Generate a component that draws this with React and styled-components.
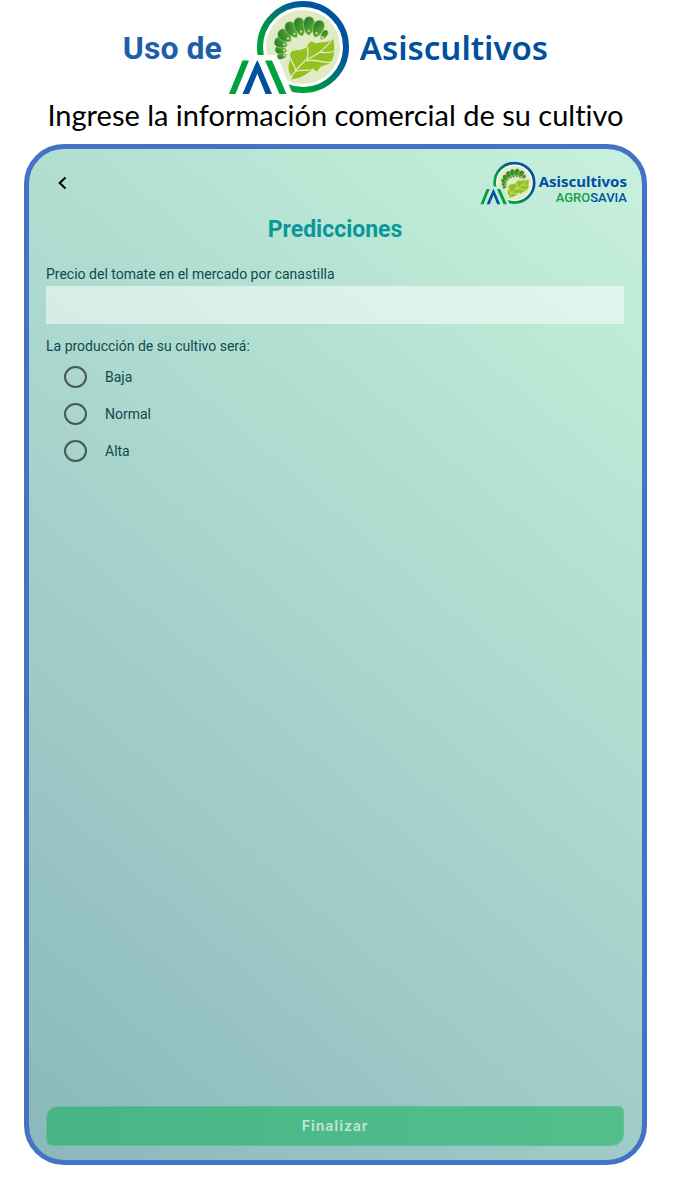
import { useState } from "react";
import styled, { createGlobalStyle } from "styled-components";

const GlobalStyle = createGlobalStyle`
  *, *::before, *::after {
    box-sizing: border-box;
  }
  body {
    margin: 0;
    background: #fff;
    font-family: Roboto, sans-serif;
  }
`;

const Page = styled.main`
  display: flex;
  flex-direction: column;
  min-height: 100vh;
  padding: 0 26px 14px 24px;
`;

const Header = styled.header`
  display: flex;
  flex-direction: column;
  align-items: center;
`;

const Heading = styled.h1`
  display: flex;
  align-items: center;
  gap: 6px;
  height: 95px;
  margin: 0;
  font-size: 32px;
  font-weight: 700;
  line-height: 38px;
  color: #1c5fa8;
`;

const Brand = styled.span`
  font-family: "Noto Sans", sans-serif;
  font-size: ${(props) => (props.$small ? "15px" : "33px")};
  font-weight: ${(props) => (props.$small ? 700 : 600)};
  line-height: ${(props) => (props.$small ? "18px" : "38px")};
  color: #00509f;
`;

const HeadingBrand = styled.span`
  display: flex;
  align-items: center;
  gap: 10px;
`;

const Subtitle = styled.p`
  margin: 0;
  font-family: Lato, sans-serif;
  font-size: 29px;
  font-variant-ligatures: none;
  line-height: 40px;
  text-align: center;
  color: #000;
`;

const Card = styled.section`
  display: flex;
  flex: 1;
  flex-direction: column;
  margin-top: 9px;
  padding: 12px 18px 14px 17px;
  border: 5px solid #4472c4;
  border-radius: 40px;
  background: linear-gradient(
    41deg,
    #8ab8bb 0%,
    #a1cdc9 37%,
    #bde9d6 84%,
    #c8f0de 100%
  );
`;

const TopBar = styled.div`
  display: flex;
  align-items: center;
  justify-content: space-between;
  height: 44px;
  margin-right: -3px;
`;

const BackButton = styled.button`
  display: flex;
  align-items: center;
  justify-content: center;
  width: 32px;
  height: 32px;
  padding: 0;
  border: 0;
  background: none;
  cursor: pointer;
`;

const SmallLogo = styled.div`
  display: flex;
  align-items: center;
  gap: 3px;
`;

const SmallLogoText = styled.div`
  display: flex;
  flex-direction: column;
  align-items: flex-end;
  padding-top: 12px;
`;

const Agrosavia = styled.span`
  font-size: 13px;
  font-weight: 500;
  line-height: 16px;
  color: #16a045;
`;

const Savia = styled.span`
  color: #00509f;
`;

const Title = styled.h2`
  margin: 11px 0 0;
  font-size: 23px;
  font-weight: 700;
  line-height: 28px;
  text-align: center;
  color: #0a979c;
`;

const Label = styled.label`
  margin-top: 20px;
  font-size: 14px;
  line-height: 20px;
  color: #0e4b4f;
`;

const PriceInput = styled.input`
  width: 100%;
  height: 38px;
  margin-top: 2px;
  padding: 0 12px;
  border: 0;
  border-radius: 0;
  background: rgba(255, 255, 255, 0.5);
  font: inherit;
`;

const Options = styled.fieldset`
  display: flex;
  flex-direction: column;
  min-width: 0;
  margin: 12px 0 0;
  padding: 0;
  border: 0;
`;

const Legend = styled.legend`
  padding: 0 0 2px;
  font-size: 14px;
  line-height: 20px;
  color: #0e4b4f;
`;

const Option = styled.label`
  display: flex;
  align-items: center;
  gap: 18px;
  height: 37px;
  padding-left: 18px;
  font-size: 14px;
  color: #0e4b4f;
`;

const Radio = styled.input`
  appearance: none;
  width: 23px;
  height: 22px;
  margin: 0;
  border: 2px solid #455a57;
  border-radius: 50%;

  &:checked {
    background: radial-gradient(#455a57 45%, transparent 50%);
  }
`;

const SubmitButton = styled.button`
  height: 40px;
  margin-top: auto;
  border: 1px solid #62bd9b;
  border-radius: 12px 6px 12px 6px;
  background: linear-gradient(90deg, #47b586, #54bf8d);
  font-family: inherit;
  font-size: 15px;
  font-weight: 600;
  letter-spacing: 1px;
  color: #bfe5d6;
`;

// caterpillar body, from the tail round to the head
const segments = [
  { x: 54, y: 56, rx: 5, ry: 3, turn: -12 },
  { x: 53, y: 50, rx: 6, ry: 4, turn: 8 },
  { x: 53, y: 43, rx: 7, ry: 5, turn: 26 },
  { x: 57, y: 36, rx: 8, ry: 5.5, turn: 42 },
  { x: 64, y: 30, rx: 9, ry: 5.5, turn: 58 },
  { x: 72, y: 27, rx: 9.5, ry: 5.5, turn: 76 },
  { x: 81, y: 26, rx: 9.5, ry: 5.5, turn: 92 },
  { x: 90, y: 29, rx: 9, ry: 5.5, turn: 110 },
  { x: 96, y: 35, rx: 5.5, ry: 3, turn: 125 },
];

function LogoMark({ id, width, height }) {
  return (
    <svg width={width} height={height} viewBox="0 0 122 95" aria-hidden="true">
      <defs>
        <linearGradient id={`${id}-ring`} x1="0.1" y1="0.75" x2="0.8" y2="0.15">
          <stop offset="0.2" stopColor="#00a03c" />
          <stop offset="0.85" stopColor="#00539f" />
        </linearGradient>
        <linearGradient id={`${id}-body`} x1="0" y1="1" x2="1" y2="0">
          <stop offset="0" stopColor="#15752f" />
          <stop offset="1" stopColor="#74b72f" />
        </linearGradient>
        <mask id={`${id}-cut`} maskUnits="userSpaceOnUse" x="0" y="0" width="122" height="95">
          <path d="M0 0h122v95H65L49 55H0z" fill="#fff" />
        </mask>
      </defs>
      <g mask={`url(#${id}-cut)`}>
        <circle
          cx="75"
          cy="47"
          r="43"
          fill="#fff"
          stroke={`url(#${id}-ring)`}
          strokeWidth="6"
        />
        <circle cx="75" cy="47" r="37" fill="#e1ebc5" />
      </g>
      {segments.map((s) => (
        <g key={s.x + s.y} transform={`translate(${s.x} ${s.y}) rotate(${s.turn})`}>
          <path
            d={`M${-s.rx} 0C${-s.rx} ${-s.ry * 1.4} ${s.rx * 0.5} ${-s.ry * 1.3} ${s.rx} 0C${s.rx * 0.5} ${s.ry * 1.3} ${-s.rx} ${s.ry * 1.4} ${-s.rx} 0z`}
            fill={`url(#${id}-body)`}
            stroke="#c3dd9a"
            strokeWidth="0.5"
          />
          <circle cx={s.rx * 0.5} cy="0" r="1.1" fill="#d6eab0" />
        </g>
      ))}
      <path
        d="M105 38.5c2 8 2 17-2 24-5 3-9 3-11 5l-3 4-4-2c-5 3-10 8-17 9l-5 1 1-3c-5-5-4-13-1-18-2-5 0-8 4-8 4-1 8 0 11-3 2-2 3-6 6-6l4 2c5-2 12 0 17-5z"
        fill="#94c11f"
      />
      <path
        d="M62 80c3-7 8-13 16-20 6-3 10-5 14-8 5-4 9-8 13-14M79 59c1-4 2-8 0-13M68 71c-1-5-4-8-5-12M68 71c7-2 12 1 18-2M78 61c9-3 16 3 26 1M92 52c5 1 9 1 15-1"
        fill="none"
        stroke="#e1ebc5"
        strokeWidth="1.3"
      />
      <path d="M14.5 60.5H21L7.5 94H1z" fill="#00a03c" />
      <path d="M37 60.5h7L58.5 94h-7z" fill="#00a03c" />
      <path d="M26.5 66l2.8-6 2.8 6L44 94h-6.5l-8.2-20.5L21 94h-6.5z" fill="#00509f" />
    </svg>
  );
}

const levels = ["Baja", "Normal", "Alta"];

function App() {
  const [price, setPrice] = useState("");
  const [level, setLevel] = useState("");

  return (
    <>
      <GlobalStyle />
      <Page>
        <Header>
          <Heading>
            Uso de
            <HeadingBrand>
              <LogoMark id="main" width={122} height={95} />
              <Brand>Asiscultivos</Brand>
            </HeadingBrand>
          </Heading>
          <Subtitle>Ingrese la información comercial de su cultivo</Subtitle>
        </Header>
        <Card>
          <TopBar>
            <BackButton type="button" aria-label="Volver">
              <svg width="10" height="14" viewBox="0 0 10 14" aria-hidden="true">
                <path
                  d="M8.5 1.5L2.7 7l5.8 5.5"
                  fill="none"
                  stroke="#000"
                  strokeWidth="2"
                />
              </svg>
            </BackButton>
            <SmallLogo>
              <LogoMark id="small" width={56} height={44} />
              <SmallLogoText>
                <Brand $small>Asiscultivos</Brand>
                <Agrosavia>
                  AGRO<Savia>SAVIA</Savia>
                </Agrosavia>
              </SmallLogoText>
            </SmallLogo>
          </TopBar>
          <Title>Predicciones</Title>
          <Label htmlFor="price">
            Precio del tomate en el mercado por canastilla
          </Label>
          <PriceInput
            id="price"
            type="text"
            inputMode="decimal"
            value={price}
            onChange={(e) => setPrice(e.target.value)}
          />
          <Options>
            <Legend>La producción de su cultivo será:</Legend>
            {levels.map((name) => (
              <Option key={name}>
                <Radio
                  type="radio"
                  name="level"
                  checked={level === name}
                  onChange={() => setLevel(name)}
                />
                {name}
              </Option>
            ))}
          </Options>
          <SubmitButton type="button">Finalizar</SubmitButton>
        </Card>
      </Page>
    </>
  );
}

export default App;
